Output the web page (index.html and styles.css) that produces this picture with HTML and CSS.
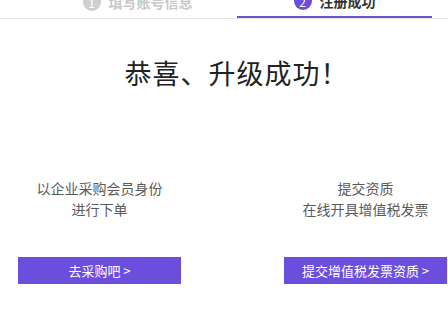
FILE: index.html
```html
<!DOCTYPE html>
<html>
<head>
<meta charset="utf-8">
<link rel="stylesheet" href="styles.css">
</head>
<body>
<div class="steps">
  <div class="step">
    <span class="num">1</span><span class="label">填写账号信息</span>
  </div>
  <div class="step active">
    <span class="num">2</span><span class="label">注册成功</span>
  </div>
</div>
<h1 class="title">恭喜、升级成功！</h1>
<div class="cols">
  <div class="col">
    <p class="desc">以企业采购会员身份<br>进行下单</p>
    <a class="btn">去采购吧 &gt;</a>
  </div>
  <div class="col">
    <p class="desc">提交资质<br>在线开具增值税发票</p>
    <a class="btn">提交增值税发票资质 &gt;</a>
  </div>
</div>
</body>
</html>
```
FILE: styles.css
```css
html, body {
  margin: 0;
  padding: 0;
  background: #fff;
  width: 448px;
  height: 309px;
  overflow: hidden;
  font-family: "Noto Sans CJK SC", "Noto Sans", sans-serif;
}
.steps {
  display: flex;
  gap: 2px;
  padding-left: 40px;
  height: 18px;
  border-bottom: 1px solid #e6e6e6;
}
.step {
  box-sizing: border-box;
  width: 195px;
  height: 32px;
  margin-top: -14px;
  display: flex;
  align-items: center;
  justify-content: center;
  gap: 8px;
  color: #c8c8c8;
  font-size: 14px;
  font-weight: 700;
}
.step.active {
  border-bottom: 2px solid #6a57c8;
  color: #333;
}
.num {
  width: 18px;
  height: 18px;
  border-radius: 50%;
  background: #cfcfcf;
  color: #fff;
  font-size: 12px;
  font-weight: 400;
  display: flex;
  align-items: center;
  justify-content: center;
}
.active .num {
  background: #6b4fdc;
}
.title {
  margin: 38px 0 0;
  text-align: center;
  font-size: 27px;
  line-height: 31px;
  letter-spacing: 1px;
  font-weight: 400;
  color: #222;
  padding-left: 25px;
}
.cols {
  display: flex;
  justify-content: space-between;
  padding: 0 1px 0 18px;
  margin-top: 90px;
}
.col {
  width: 163px;
  display: flex;
  flex-direction: column;
  align-items: stretch;
}
.desc {
  margin: 0;
  text-align: center;
  font-size: 14px;
  line-height: 21px;
  color: #5a5a5a;
}
.btn {
  margin-top: 37px;
  height: 27px;
  background: #6b4fdc;
  color: #fff;
  font-size: 13px;
  line-height: 27px;
  text-align: center;
}
```
